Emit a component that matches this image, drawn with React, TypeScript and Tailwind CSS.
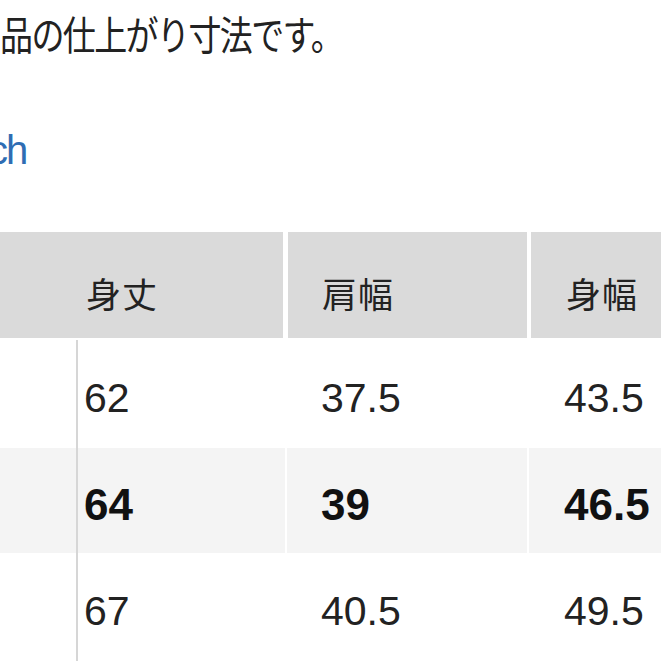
import React from "react";

const rows = [
  { a: "62", b: "37.5", c: "43.5", bold: false, bg: "bg-white" },
  { a: "64", b: "39", c: "46.5", bold: true, bg: "bg-[#f4f4f4]" },
  { a: "67", b: "40.5", c: "49.5", bold: false, bg: "bg-white" },
];

export default function App() {
  return (
    <div className="w-[661px] h-[661px] overflow-hidden bg-white text-[#222] font-['Liberation_Sans','Noto_Sans_CJK_JP',sans-serif]">
      <div className="h-[74px] flex items-center pb-[8px]">
        <span className="block whitespace-nowrap text-[33px] leading-none tracking-[-1.6px] scale-y-[1.2] origin-center font-['Noto_Sans_CJK_JP',sans-serif]">
          品の仕上がり寸法です。
        </span>
      </div>
      <div className="h-[158px] pt-[56px]">
        <span className="block ml-[-12px] text-[40px] leading-none text-[#2f6db3] font-['Liberation_Sans',sans-serif] tracking-[-2px]">
          ch
        </span>
      </div>
      <div className="flex h-[106px] gap-[5px] bg-white">
        <div className="w-[283px] bg-[#dadada] flex items-center pl-[86px] pt-[14px]">
          <span className="text-[35px] leading-none tracking-[1px] font-['Noto_Sans_CJK_JP',sans-serif]">身丈</span>
        </div>
        <div className="w-[239px] bg-[#dadada] flex items-center pl-[34px] pt-[14px] mr-[-1px]">
          <span className="text-[35px] leading-none tracking-[1px] font-['Noto_Sans_CJK_JP',sans-serif]">肩幅</span>
        </div>
        <div className="flex-1 bg-[#dadada] flex items-center pl-[35px] pt-[14px]">
          <span className="text-[35px] leading-none tracking-[1px] font-['Noto_Sans_CJK_JP',sans-serif]">身幅</span>
        </div>
      </div>
      <div className="h-[2px]" />
      {rows.map((r, i) => (
        <div key={i} className={`flex ${i === 1 ? "h-[105px]" : "h-[108px]"}`}>
          <div className={`w-[76px] ${r.bg}`} />
          <div className="w-[2px] bg-[#d6d6d6]" />
          <div className={`w-[207px] ${r.bg} flex items-center pl-[6px] pt-[8px]`}>
            <span className={r.bold ? "text-[44px] leading-none font-bold text-[#111]" : "text-[41px] leading-none"}>{r.a}</span>
          </div>
          <div className="w-[2px] bg-white" />
          <div className={`w-[240px] ${r.bg} flex items-center pl-[34px] pt-[8px]`}>
            <span className={r.bold ? "text-[44px] leading-none font-bold text-[#111]" : "text-[41px] leading-none"}>{r.b}</span>
          </div>
          <div className="w-[2px] bg-white" />
          <div className={`flex-1 ${r.bg} flex items-center pl-[35px] pt-[8px]`}>
            <span className={r.bold ? "text-[44px] leading-none font-bold text-[#111]" : "text-[41px] leading-none"}>{r.c}</span>
          </div>
        </div>
      ))}
    </div>
  );
}
